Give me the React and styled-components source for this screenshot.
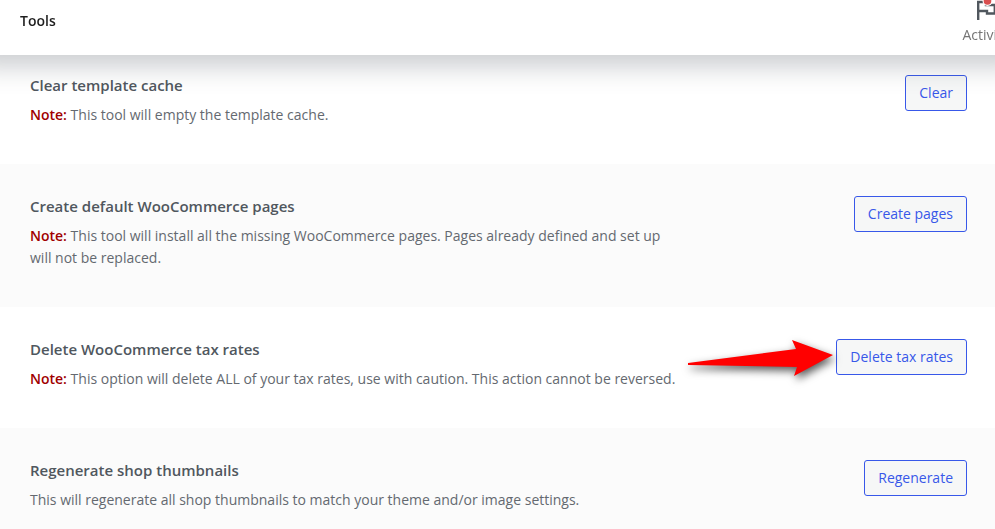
import React from 'react';
import styled, { createGlobalStyle } from 'styled-components';

const colors = {
  blue: '#3858e9',
  heading: '#50575e',
  text: '#646970',
  note: '#a00000',
};

const tools = [
  {
    id: 'clear_template_cache',
    name: 'Clear template cache',
    note: true,
    desc: 'This tool will empty the template cache.',
    action: 'Clear',
  },
  {
    id: 'install_pages',
    name: 'Create default WooCommerce pages',
    note: true,
    desc: 'This tool will install all the missing WooCommerce pages. Pages already defined and set up will not be replaced.',
    action: 'Create pages',
  },
  {
    id: 'delete_taxes',
    name: 'Delete WooCommerce tax rates',
    note: true,
    desc: 'This option will delete ALL of your tax rates, use with caution. This action cannot be reversed.',
    action: 'Delete tax rates',
    highlighted: true,
  },
  {
    id: 'regenerate_thumbnails',
    name: 'Regenerate shop thumbnails',
    desc: 'This will regenerate all shop thumbnails to match your theme and/or image settings.',
    action: 'Regenerate',
  },
];

const App = () => (
  <>
    <GlobalStyle />
    <Header>
      <PageTitle>Tools</PageTitle>
      <ActivityButton type="button">
        <FlagIcon />
        Activity
      </ActivityButton>
    </Header>
    <ToolList>
      { tools.map(tool =>
        <ToolRow key={tool.id}>
          <Info>
            <ToolName>{ tool.name }</ToolName>
            <Description>
              { tool.note && <><Note>Note:</Note>{' '}</> }
              { tool.desc }
            </Description>
          </Info>
          <Action>
            { tool.highlighted && <Arrow /> }
            <Button type="button">{ tool.action }</Button>
          </Action>
        </ToolRow>
      ) }
    </ToolList>
  </>
);

const FlagIcon = () => (
  <svg width="24" height="24" viewBox="0 0 24 24" aria-hidden="true">
    <path
      d="M4.2 20V2H12V5H20.8V13.5H13V11H4.2"
      fill="none"
      stroke="#50575e"
      strokeWidth="2.4"
    />
    <circle cx="13.5" cy="1" r="5" fill="#fff" />
    <circle cx="13.5" cy="1" r="3.8" fill="#d94f4f" />
  </svg>
);

const Arrow = () => (
  <ArrowSvg width="152" height="60" viewBox="0 0 152 60" aria-hidden="true">
    <path d="M4 34L112 20L108 11L149 26L110 47L113 38L4 36Z" fill="#f00" />
  </ArrowSvg>
);

const GlobalStyle = createGlobalStyle`
  * {
    box-sizing: border-box;
  }
  html {
    scrollbar-width: none;
  }
  body {
    margin: 0;
    overflow-x: hidden;
    background: #fff;
    color: ${colors.text};
    font-family: 'Open Sans', 'Noto Sans', sans-serif;
    font-size: 14px;
    line-height: 22px;
  }
`

const Header = styled.header`
  position: sticky;
  top: 0;
  z-index: 1;
  display: flex;
  align-items: flex-start;
  justify-content: space-between;
  height: 55px;
  padding-left: 20px;
  background: #fff;
  box-shadow: 0 -12px 24px 24px rgba(85, 93, 102, .3);
`

const PageTitle = styled.h1`
  margin: 10px 0 0;
  color: #1e1e1e;
  font-size: 14px;
  font-weight: 600;
`

const ActivityButton = styled.button`
  display: flex;
  flex-direction: column;
  align-items: center;
  flex: none;
  margin-right: -14px;
  padding: 0;
  border: 0;
  background: none;
  color: #757575;
  font: inherit;
`

const ToolList = styled.ul`
  margin: -12px 0 0;
  padding: 0;
  list-style: none;
`

const ToolRow = styled.li`
  display: flex;
  align-items: flex-start;
  justify-content: space-between;
  padding: 32px 28px 38px 30px;
  &:nth-child(even) {
    background: #fbfbfb;
  }
`

const Info = styled.div`
  flex: 0 1 650px;
`

const ToolName = styled.h2`
  margin: 0 0 9px;
  color: ${colors.heading};
  font-size: 15px;
  font-weight: 600;
  line-height: 20px;
`

const Description = styled.p`
  margin: 0;
`

const Note = styled.strong`
  color: ${colors.note};
  font-weight: 600;
`

const Action = styled.div`
  position: relative;
  flex: none;
`

const Button = styled.button`
  display: block;
  height: 36px;
  padding: 0 13px;
  border: 1px solid ${colors.blue};
  border-radius: 3px;
  background: #f6f7f7;
  color: ${colors.blue};
  font: inherit;
`

const ArrowSvg = styled.svg`
  position: absolute;
  top: -10px;
  right: 100%;
  filter: drop-shadow(2px 4px 4px rgba(0, 0, 0, .65));
`

export default App;
